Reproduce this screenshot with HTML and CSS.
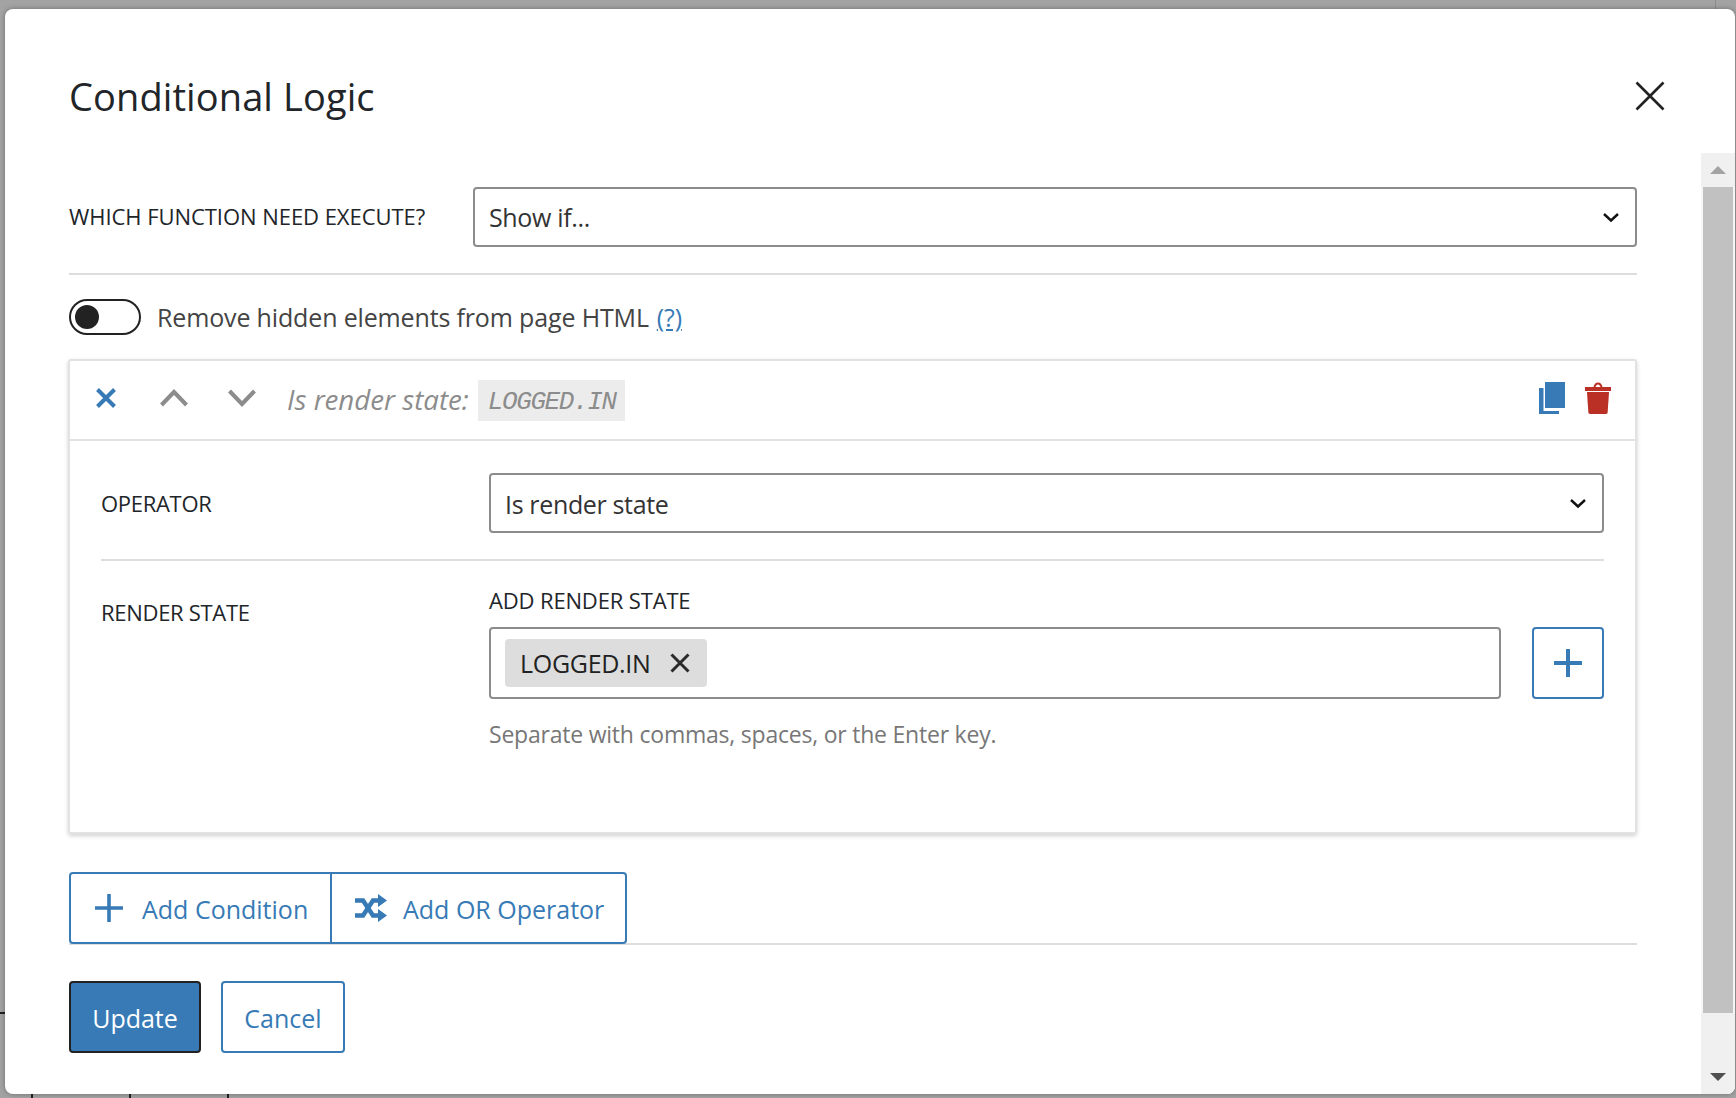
FILE: index.html
```html
<!DOCTYPE html>
<html>
  <head>
    <title>Conditional Logic</title>
    <link rel="stylesheet" href="styles.css">
  </head>
  <body>
    <div class="backdrop-line top-line"></div>
    <div class="backdrop-line left-line"></div>
    <div class="backdrop-line foot-line foot-a"></div>
    <div class="backdrop-line foot-line foot-b"></div>
    <div class="backdrop-line foot-line foot-c"></div>

    <div class="modal">
      <div class="modal-head">
        <h1>Conditional Logic</h1>
        <button class="close-btn" aria-label="Close">
          <svg width="30" height="30" viewBox="0 0 30 30"><path d="M1.500 1.500L28.500 28.500M28.500 1.500L1.500 28.500" stroke="#222" stroke-width="2.600" fill="none"/></svg>
        </button>
      </div>

      <div class="modal-body">
        <div class="content">
          <div class="field-row first-row">
            <label class="field-label">WHICH FUNCTION NEED EXECUTE?</label>
            <div class="select">
              <span>Show if...</span>
              <svg class="caret" width="18" height="11" viewBox="0 0 18 11"><path d="M2 2L9 8.500L16 2" stroke="#111" stroke-width="2.400" fill="none"/></svg>
            </div>
          </div>

          <div class="toggle-row">
            <span class="toggle"><span class="knob"></span></span>
            <span class="toggle-text">Remove hidden elements from page HTML</span>
            <a class="help-link" href="#">(?)</a>
          </div>

          <div class="card">
            <div class="card-head">
              <svg class="head-icon" width="20" height="20" viewBox="0 0 20 20"><path d="M1.500 1.500L18.500 18.500M18.500 1.500L1.500 18.500" stroke="#377ab6" stroke-width="4" fill="none"/></svg>
              <svg class="head-icon icon-up" width="28" height="18" viewBox="0 0 28 18"><path d="M1.500 16L14 3L26.500 16" stroke="#8c8c8c" stroke-width="4" fill="none"/></svg>
              <svg class="head-icon icon-down" width="28" height="18" viewBox="0 0 28 18"><path d="M1.500 2L14 15L26.500 2" stroke="#8c8c8c" stroke-width="4" fill="none"/></svg>
              <span class="summary">Is render state:</span>
              <code class="summary-code">LOGGED.IN</code>
              <span class="head-spacer"></span>
              <svg class="head-icon icon-copy" width="26" height="32" viewBox="0 0 26 32"><path d="M6 0H26V26H6Z" fill="#377ab6"/><path d="M0 6H4.500V29H20V32H0Z" fill="#377ab6"/></svg>
              <svg class="head-icon" width="26" height="32" viewBox="0 0 26 32"><path d="M0 5H8.500C9 2.500 10.500 0.500 13 0.500C15.500 0.500 17 2.500 17.500 5H26V9H0Z M10.500 5H15.500C15 3.500 14.200 2.500 13 2.500C11.800 2.500 11 3.500 10.500 5Z" fill="#bb3024" fill-rule="evenodd"/><path d="M2 10H24L22.700 30C22.600 31.200 22 32 21 32H5C4 32 3.400 31.200 3.300 30Z" fill="#bb3024"/></svg>
            </div>

            <div class="card-body">
              <div class="field-row operator-row">
                <label class="field-label">OPERATOR</label>
                <div class="select">
                  <span>Is render state</span>
                  <svg class="caret" width="18" height="11" viewBox="0 0 18 11"><path d="M2 2L9 8.500L16 2" stroke="#111" stroke-width="2.400" fill="none"/></svg>
                </div>
              </div>

              <div class="field-row state-row">
                <label class="field-label state-label">RENDER STATE</label>
                <div class="state-main">
                  <div class="add-label">ADD RENDER STATE</div>
                  <div class="tag-row">
                    <div class="tag-input">
                      <span class="tag">LOGGED.IN
                        <svg width="20" height="20" viewBox="0 0 20 20"><path d="M1.500 1.500L18.500 18.500M18.500 1.500L1.500 18.500" stroke="#2a2a2a" stroke-width="3" fill="none"/></svg>
                      </span>
                    </div>
                    <button class="plus-btn" aria-label="Add">
                      <svg width="28" height="28" viewBox="0 0 28 28"><path d="M14 0V28M0 14H28" stroke="#377ab6" stroke-width="4" fill="none"/></svg>
                    </button>
                  </div>
                  <div class="help-text">Separate with commas, spaces, or the Enter key.</div>
                </div>
              </div>
            </div>
          </div>

          <div class="btn-group-row">
            <button class="group-btn first">
              <svg width="28" height="28" viewBox="0 0 28 28"><path d="M14 0V28M0 14H28" stroke="#377ab6" stroke-width="3.600" fill="none"/></svg>
              <span>Add Condition</span>
            </button>
            <button class="group-btn last">
              <svg width="32" height="28" viewBox="0 0 32 28"><path d="M0 6.500H8L18 21.500H24" stroke="#377ab6" stroke-width="4.500" fill="none"/><path d="M0 21.500H8L18 6.500H24" stroke="#377ab6" stroke-width="4.500" fill="none"/><path d="M23 0L32 6.500L23 13Z M23 15L32 21.500L23 28Z" fill="#377ab6"/></svg>
              <span>Add OR Operator</span>
            </button>
          </div>

          <div class="actions">
            <button class="btn-update">Update</button>
            <button class="btn-cancel">Cancel</button>
          </div>
        </div>

        <div class="scrollbar">
          <div class="arrow-box"><span class="arrow-up"></span></div>
          <div class="thumb"></div>
          <div class="arrow-box bottom"><span class="arrow-down"></span></div>
        </div>
      </div>
    </div>
  </body>
</html>
```

FILE: styles.css
```css
* {
  box-sizing: border-box;
}

html, body {
  margin: 0;
  height: 100%;
  overflow: hidden;
}

body {
  position: relative;
  background-color: #a3a3a3;
  font-family: "Open Sans", "Noto Sans", sans-serif;
  color: #222;
  padding: 9px 1px 4px 5px;
}

.backdrop-line {
  position: absolute;
  background-color: #222;
}

.top-line {
  left: 1715px;
  top: 0;
  width: 1px;
  height: 9px;
  background-color: #8c8c8c;
}

.left-line {
  left: 0;
  top: 1012px;
  width: 5px;
  height: 2px;
}

.foot-line {
  bottom: 0;
  width: 2px;
  height: 4px;
}

.foot-a { left: 31px; }
.foot-b { left: 129px; }
.foot-c { left: 227px; }

.modal {
  position: relative;
  height: 1085px;
  background-color: #fff;
  border-radius: 8px;
  box-shadow: 0 0 5px rgba(0, 0, 0, 0.35);
  overflow: hidden;
  display: flex;
  flex-direction: column;
}

.modal-head {
  height: 144px;
  flex: none;
  display: flex;
  justify-content: space-between;
  padding: 0 70px 0 64px;
}

h1 {
  margin: 63px 0 0;
  font-size: 38px;
  line-height: 48px;
  font-weight: 500;
  letter-spacing: 0.1px;
  color: #212529;
}

.close-btn {
  margin-top: 72px;
  width: 30px;
  height: 30px;
  padding: 0;
  border: none;
  background: none;
}

.modal-body {
  flex: 1;
  display: flex;
  min-height: 0;
}

.content {
  flex: 1;
  padding: 34px 64px 0 64px;
}

.field-row {
  display: flex;
}

.first-row {
  padding-bottom: 26px;
  border-bottom: 2px solid #ddd;
  align-items: center;
}

.first-row .field-label {
  margin-bottom: 2px;
  letter-spacing: -0.05px;
}

.field-label {
  flex: none;
  width: 404px;
  font-size: 22px;
  font-weight: 500;
  letter-spacing: -0.3px;
  color: #212529;
}

.select {
  flex: 1;
  height: 60px;
  border: 2px solid #8c8c8c;
  border-radius: 4px;
  display: flex;
  align-items: center;
  justify-content: space-between;
  padding: 0 15px 0 14px;
  font-size: 25px;
  letter-spacing: -0.35px;
  color: #333;
}

.operator-row .select span {
  padding-top: 2px;
}

.toggle-row {
  display: flex;
  align-items: center;
  margin-top: 24px;
  height: 36px;
  font-size: 25px;
  letter-spacing: -0.15px;
  color: #444;
}

.toggle {
  width: 72px;
  height: 36px;
  border: 2px solid #222;
  border-radius: 18px;
  padding: 4px;
  margin-right: 16px;
  flex: none;
}

.knob {
  display: block;
  width: 24px;
  height: 24px;
  border-radius: 50%;
  background-color: #222;
}

.help-link {
  margin-left: 8px;
  color: #377ab6;
}

.card {
  margin-top: 24px;
  width: 1569px;
  margin-left: -1px;
  height: 475px;
  border: 2px solid #e2e2e2;
  border-radius: 3px;
  box-shadow: 0 2px 4px rgba(0, 0, 0, 0.18);
}

.card-head {
  height: 80px;
  border-bottom: 2px solid #e2e2e2;
  display: flex;
  align-items: center;
  padding: 0 24px 0 26px;
}

.head-icon {
  margin-bottom: 5px;
}

.icon-up { margin-left: 44px; }
.icon-down { margin-left: 40px; }

.summary {
  margin-left: 31px;
  margin-bottom: 2px;
  font-style: italic;
  font-size: 27.7px;
  color: #8c8c8c;
}

.summary-code {
  margin-left: 9px;
  padding: 0 9px 0 10px;
  height: 41px;
  line-height: 45px;
  background-color: #ececec;
  font-family: "Liberation Mono", monospace;
  font-style: italic;
  font-size: 26px;
  letter-spacing: -1.4px;
  color: #8c8c8c;
}

.head-spacer {
  flex: 1;
}

.icon-copy { margin-right: 20px; }

.card-body {
  padding: 32px 31px 0 31px;
}

.operator-row {
  padding-bottom: 26px;
  border-bottom: 2px solid #ddd;
  align-items: center;
}

.state-row {
  padding-top: 25px;
}

.state-label {
  padding-top: 11px;
  width: 388px;
}

.operator-row .field-label {
  width: 388px;
}

.state-main {
  flex: 1;
}

.add-label {
  font-size: 22px;
  line-height: 28px;
  font-weight: 500;
  letter-spacing: -0.15px;
  color: #212529;
  margin-bottom: 13px;
}

.tag-row {
  display: flex;
  justify-content: space-between;
}

.tag-input {
  width: 1012px;
  height: 72px;
  border: 2px solid #8c8c8c;
  border-radius: 4px;
  padding: 10px 14px;
}

.tag {
  display: inline-flex;
  align-items: center;
  gap: 19px;
  height: 48px;
  padding: 0 17px 0 15px;
  background-color: #ddd;
  border-radius: 4px;
  font-size: 25px;
  letter-spacing: -0.3px;
  color: #222;
}

.plus-btn {
  width: 72px;
  height: 72px;
  padding: 0;
  border: 2px solid #377ab6;
  border-radius: 4px;
  background: #fff;
  display: flex;
  align-items: center;
  justify-content: center;
}

.help-text {
  margin-top: 19px;
  font-size: 23px;
  letter-spacing: -0.22px;
  color: #777;
}

.btn-group-row {
  margin-top: 38px;
  border-bottom: 2px solid #ddd;
  display: flex;
  height: 73px;
}

.group-btn {
  height: 72px;
  border: 2px solid #377ab6;
  background: #fff;
  color: #377ab6;
  font-family: inherit;
  font-size: 25px;
  white-space: nowrap;
  display: flex;
  align-items: center;
  gap: 19px;
  padding: 0 0 0 23px;
}

.group-btn svg {
  flex: none;
}

.group-btn span {
  padding-top: 2px;
}

.group-btn.first {
  width: 263px;
  padding-left: 24px;
  border-radius: 4px 0 0 4px;
}

.group-btn.last {
  width: 297px;
  margin-left: -2px;
  gap: 16px;
  border-radius: 0 4px 4px 0;
}

.actions {
  margin-top: 36px;
  display: flex;
  gap: 20px;
}

.actions button {
  height: 72px;
  font-family: inherit;
  font-size: 25px;
  border-radius: 4px;
  padding: 2px 0 0;
}

.btn-update {
  width: 132px;
  background-color: #377ab6;
  border: 2px solid #222;
  color: #fff;
}

.btn-cancel {
  width: 124px;
  background-color: #fff;
  border: 2px solid #377ab6;
  color: #377ab6;
}

.scrollbar {
  flex: none;
  width: 34px;
  margin-right: 1px;
  background-color: #f6f6f6;
  display: flex;
  flex-direction: column;
  padding: 0 2px;
}

.arrow-box {
  height: 34px;
  margin: 0 -2px;
  background-color: #f0f0f0;
  display: flex;
  align-items: center;
  justify-content: center;
  flex: none;
}

.arrow-box.bottom {
  height: 81px;
  align-items: flex-end;
  padding-bottom: 13px;
}

.arrow-up {
  border-left: 8px solid transparent;
  border-right: 8px solid transparent;
  border-bottom: 8px solid #a3a3a3;
}

.arrow-down {
  border-left: 8px solid transparent;
  border-right: 8px solid transparent;
  border-top: 8px solid #505050;
}

.thumb {
  flex: 1;
  background-color: #c1c1c1;
}
```
